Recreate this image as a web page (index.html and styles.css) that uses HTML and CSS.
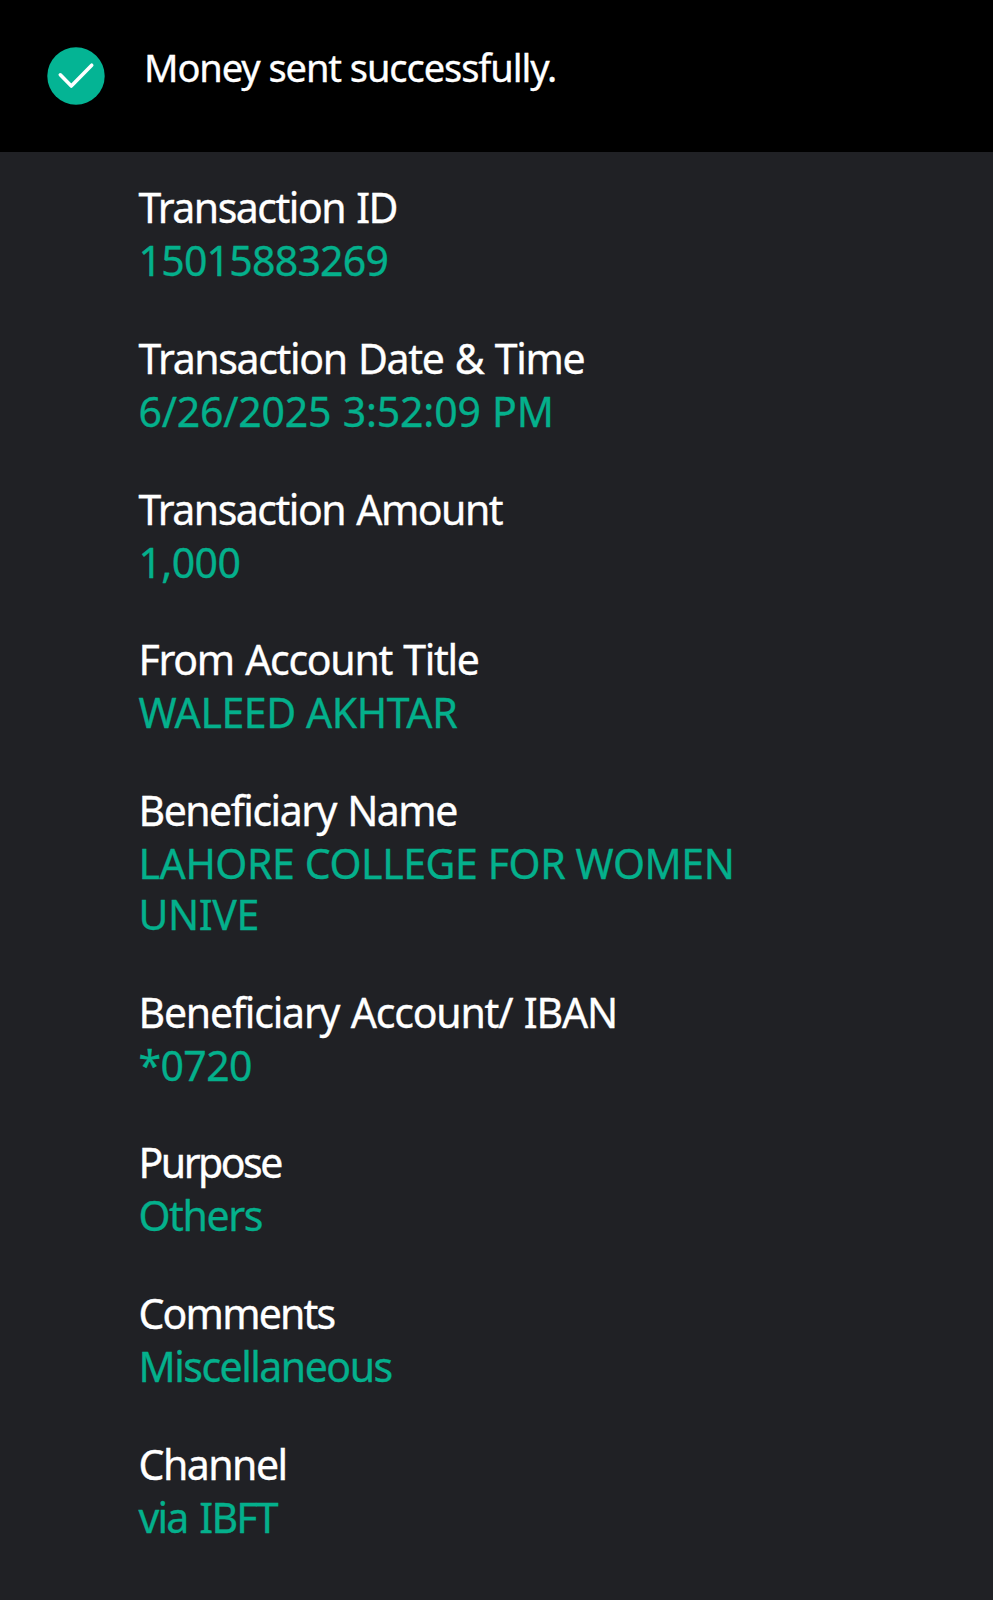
FILE: index.html
```html
<!DOCTYPE html>
<html lang="en">

<head>
  <meta charset="UTF-8">
  <meta name="viewport" content="width=device-width, initial-scale=1.0">
  <link rel="stylesheet" href="styles.css">
  <title>Money sent</title>
</head>

<body>
  <header class="status">
    <svg class="status-icon" viewBox="0 0 58 58">
      <circle cx="29" cy="29" r="28.7" fill="#04b494" />
      <path d="M13.3 27.8 L24.3 39 L44.7 18.2" fill="none" stroke="#fff" stroke-width="3.6" stroke-linecap="round" stroke-linejoin="round" />
    </svg>
    <h1 class="status-text">Money sent successfully.</h1>
  </header>

  <dl class="details">
    <div class="item id">
      <dt>Transaction ID</dt>
      <dd>15015883269</dd>
    </div>
    <div class="item date">
      <dt>Transaction Date &amp; Time</dt>
      <dd>6/26/2025 3:52:09 PM</dd>
    </div>
    <div class="item amount">
      <dt>Transaction Amount</dt>
      <dd>1,000</dd>
    </div>
    <div class="item from">
      <dt>From Account Title</dt>
      <dd>WALEED AKHTAR</dd>
    </div>
    <div class="item name">
      <dt>Beneficiary Name</dt>
      <dd>LAHORE COLLEGE FOR WOMEN<br>UNIVE</dd>
    </div>
    <div class="item iban">
      <dt>Beneficiary Account/ IBAN</dt>
      <dd>*0720</dd>
    </div>
    <div class="item purpose">
      <dt>Purpose</dt>
      <dd>Others</dd>
    </div>
    <div class="item comments">
      <dt>Comments</dt>
      <dd>Miscellaneous</dd>
    </div>
    <div class="item channel">
      <dt>Channel</dt>
      <dd>via IBFT</dd>
    </div>
  </dl>
</body>

</html>
```
FILE: styles.css
```css
body {
  margin: 0;
  min-height: 1600px;
  background-color: #202125;
  color: #fff;
  font-family: "Noto Sans", "Open Sans", sans-serif;
  -webkit-text-stroke: 0.35px;
}

.status {
  display: flex;
  box-sizing: border-box;
  height: 152px;
  padding: 47px 47px 0;
  gap: 39px;
  background-color: #000;
}

.status-icon {
  width: 58px;
  height: 58px;
}

.status-text {
  margin: -5px 0 0;
  font-size: 38px;
  font-weight: 400;
  line-height: 50px;
  letter-spacing: -1.07px;
}

.details {
  margin: 0;
  padding: 30px 138px 0 138.5px;
}

.item {
  margin-bottom: 47.2px;
  font-size: 41px;
  line-height: 50.6px;
  white-space: nowrap;
}

dt {
  height: 53px;
  letter-spacing: -1.5px;
  word-spacing: 2px;
}

dd {
  margin: 0;
  color: #04b08c;
  letter-spacing: -0.4px;
}

/* spacing per row */
.id dd {
  letter-spacing: -0.75px;
}

.date dt {
  letter-spacing: -1.35px;
}

.from dt {
  letter-spacing: -1.3px;
}

.date dd {
  letter-spacing: -0.2px;
  word-spacing: 1px;
}

.amount dd,
.iban dd {
  letter-spacing: -0.6px;
}

.iban dt {
  letter-spacing: -1.2px;
}

.purpose dt {
  letter-spacing: -2.5px;
}

.purpose dd {
  letter-spacing: -1.4px;
}

.comments dt {
  letter-spacing: -1.8px;
}

.comments dd,
.channel dt {
  letter-spacing: -1.5px;
}

.channel dd {
  letter-spacing: -1.8px;
  word-spacing: 3px;
}
```
